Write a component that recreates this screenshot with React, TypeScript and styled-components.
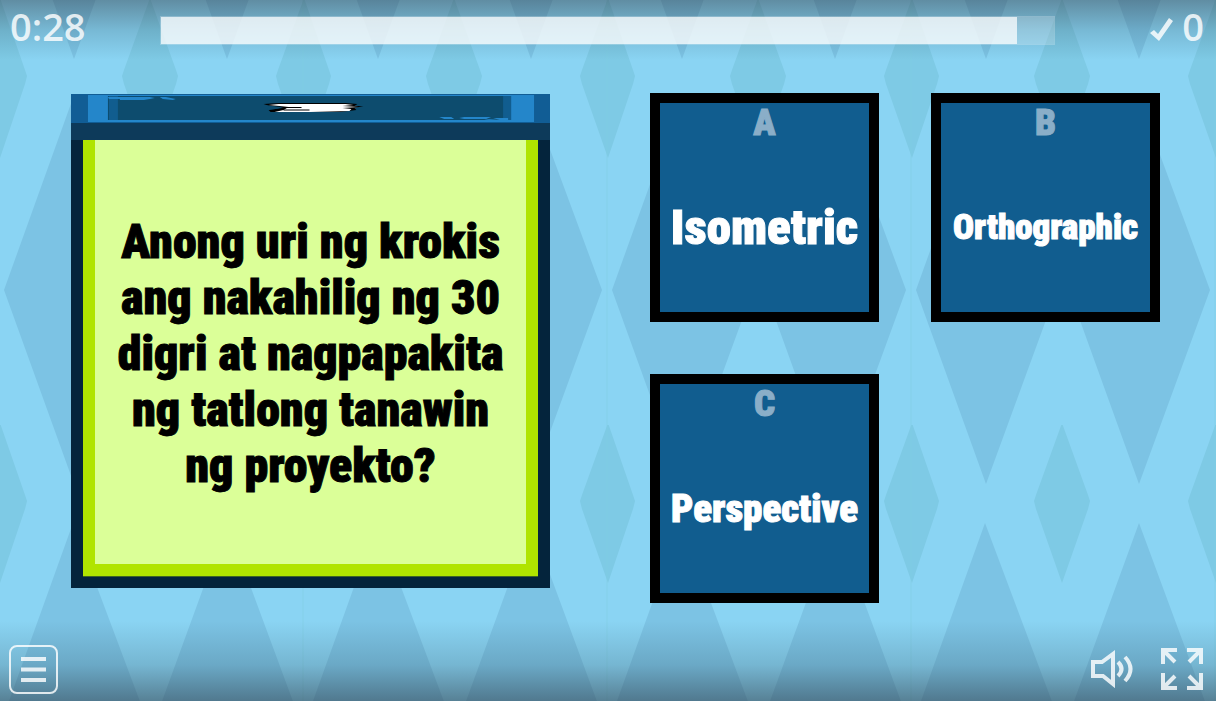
import React from "react";
import styled, { createGlobalStyle } from "styled-components";

const display = `"Roboto Condensed", Roboto, "Open Sans", sans-serif`;

const GlobalStyle = createGlobalStyle`
  *, *::before, *::after { box-sizing: border-box; }
  body { margin: 0; background: #8ad4f3; }
  button { font: inherit; color: inherit; padding: 0; cursor: pointer; }
`;

const Page = styled.div`
  position: relative;
  isolation: isolate;
  display: flex;
  flex-direction: column;
  min-height: 100vh;
  overflow: hidden;
  font-family: "Open Sans", sans-serif;
`;

const Backdrop = styled.svg`
  position: absolute;
  inset: 0;
  z-index: -1;
  width: 100%;
  height: 100%;
`;

const TopBar = styled.header`
  display: grid;
  grid-template-columns: 150px 1fr 149px;
  align-items: start;
  height: 60px;
  padding: 0 12px 0 10px;
  background: linear-gradient(rgba(45, 55, 65, 0.45), rgba(45, 75, 90, 0.2) 50%, rgba(45, 75, 90, 0));
`;

const Figure = styled.div`
  display: flex;
  align-items: center;
  justify-content: ${(p: { $end?: boolean }) => (p.$end ? "flex-end" : "flex-start")};
  gap: 8px;
  height: 52px;
  font-size: 38px;
  font-weight: 600;
  line-height: 52px;
  color: rgba(255, 255, 255, 0.82);
`;

const Tick = styled.svg`
  display: block;
  margin-top: 8px;
`;

const Track = styled.div`
  height: 29px;
  margin-top: 16px;
  border: 1px solid rgba(255, 255, 255, 0.04);
  background: rgba(255, 255, 255, 0.2);
`;

const Fill = styled.div`
  height: 100%;
  background: rgba(255, 255, 255, 0.72);
`;

const Board = styled.main`
  flex: 1;
  display: grid;
  grid-template-columns: 479fr 510fr;
  align-items: start;
  gap: 100px;
  padding: 33px 56px 18px 71px;
`;

const QuestionCard = styled.section`
  display: flex;
  flex-direction: column;
  aspect-ratio: 479 / 494;
  margin-top: 1px;
  background: #04243c;
`;

const Banner = styled.svg`
  display: block;
  flex: none;
  width: 100%;
  height: 29px;
`;

const Band = styled.div`
  flex: none;
  height: 17px;
  background: #0d3a5a;
`;

const QuestionPanel = styled.div`
  flex: 1;
  display: flex;
  align-items: center;
  justify-content: center;
  margin: 0 12px 12px;
  padding-top: 4px;
  border: 12px solid #b0e400;
  border-top: 0;
  box-shadow: 0 1px 0 #3d6424;
  background: #dbff98;
`;

const QuestionText = styled.h1`
  max-width: 404px;
  margin: 0;
  font-family: ${display};
  font-size: 48px;
  font-weight: 900;
  line-height: 56px;
  text-align: center;
  color: #000;
  -webkit-text-stroke: 1px #000;
`;

const Answers = styled.div`
  display: grid;
  grid-template-columns: 1fr 1fr;
  gap: 52px;
`;

const AnswerButton = styled.button`
  display: flex;
  flex-direction: column;
  aspect-ratio: 1;
  min-width: 0;
  border: 10px solid #000;
  background: #115d8f;
  font-family: ${display};
  font-weight: 900;
`;

const Letter = styled.span`
  width: 100%;
  font-size: 37px;
  line-height: 40px;
  color: #8aaec8;
  -webkit-text-stroke: 1px #8aaec8;
`;

const AnswerText = styled.span`
  flex: 1;
  display: flex;
  align-items: center;
  justify-content: center;
  width: 100%;
  font-size: ${(p: { $size: number }) => p.$size}px;
  color: #fff;
  -webkit-text-stroke: 1px #fff;
`;

const BottomBar = styled.footer`
  display: flex;
  align-items: center;
  justify-content: space-between;
  height: 80px;
  padding: 16px 13px 0 9px;
  background: linear-gradient(rgba(45, 75, 90, 0), rgba(45, 75, 90, 0.22) 55%, rgba(45, 60, 72, 0.55));
`;

const Tools = styled.div`
  display: flex;
  align-items: center;
  gap: 27px;
`;

const IconButton = styled.button`
  display: flex;
  border: 0;
  background: none;
  color: rgba(255, 255, 255, 0.82);
`;

const answers = [
  { letter: "A", text: "Isometric", size: 49 },
  { letter: "B", text: "Orthographic", size: 35 },
  { letter: "C", text: "Perspective", size: 39 },
];

function Diamonds() {
  return (
    <Backdrop aria-hidden="true">
      <defs>
        <pattern id="diamonds" width="304" height="425" patternUnits="userSpaceOnUse">
          <rect width="304" height="425" fill="#8ad4f3" />
          <g fill="#7cc3e4">
            <path d="M73 98 L4 290 L74 484 L145 290Z M227 98 L157 290 L227 484 L298 290Z" />
            <path d="M73 -327 L4 -135 L74 59 L145 -135Z M227 -327 L157 -135 L227 59 L298 -135Z" />
          </g>
          <g fill="#7ecae5">
            <path d="M0 -2 L-26 70 L-28 76 L-26 84 L0 158 L25 84 L27 76 L25 70Z M150 -2 L124 70 L122 76 L124 84 L150 158 L176 84 L178 76 L176 70Z M304 -2 L278 70 L276 76 L278 84 L304 158 L329 84 L332 76Z" />
          </g>
          <path d="M303 0V425" stroke="#80c9e2" strokeOpacity=".55" />
        </pattern>
      </defs>
      <rect width="100%" height="100%" fill="url(#diamonds)" />
    </Backdrop>
  );
}

export default function App() {
  return (
    <>
      <GlobalStyle />
      <Page>
        <Diamonds />
        <TopBar>
          <Figure role="timer">0:28</Figure>
          <Track role="progressbar" aria-label="Time left" aria-valuenow={96}>
            <Fill style={{ width: "95.9%" }} />
          </Track>
          <Figure $end>
            <Tick width="24" height="24" viewBox="0 0 24 24" fill="currentColor" aria-hidden="true">
              <path d="M0 15 L4 12 L8 16 L19 0 L23 3 L9 23Z" />
            </Tick>
            0
          </Figure>
        </TopBar>

        <Board>
          <QuestionCard>
            <Banner viewBox="0 0 480 29" preserveAspectRatio="none" aria-hidden="true">
              <rect width="480" height="29" fill="#115d95" />
              <rect x="17" y="1" width="447" height="27" fill="#2486ca" />
              <rect x="37" y="2" width="404" height="24" fill="#0d4c6e" />
              <rect x="38" y="2" width="9" height="24" fill="#115d8f" />
              <rect x="433" y="2" width="8" height="24" fill="#115d8f" />
              <path d="M37 3h18l-4 2h-13z M49 5l6-2h24l5 1-5 1-6 1H49z M89 3h6l10 2-3 1-10-1z" fill="#2486ca" />
              <path d="M369 23h12l3 2h-10z M389 24l5-1h27l-5 2 15 1h-12l-5-1h-20z M423 24h15v2h-8z" fill="#2486ca" />
              <path d="M193 10 L208 9 H275 L287 10 L284 12 L293 12 L284 14 L286 16 L270 18 H200 L198 16 L212 14 L196 11Z" fill="#000" />
              <path d="M199 12 L213 13 L205 15 L196 16Z" fill="#0d4c6e" />
              <path d="M198 11 L208 10 H275 L283 11 L272 12 L288 13 L272 14 L281 15 L279 17 L240 18 H204 L213 16 L218 13 L209 12Z" fill="#fff" />
              <path d="M215 13.500h16 M213 16h26" stroke="#000" fill="none" />
            </Banner>
            <Band />
            <QuestionPanel>
              <QuestionText>Anong uri ng krokis ang nakahilig ng 30 digri at nagpapakita ng tatlong tanawin ng proyekto?</QuestionText>
            </QuestionPanel>
          </QuestionCard>

          <Answers>
            {answers.map((a) => (
              <AnswerButton key={a.letter} type="button">
                <Letter>{a.letter}</Letter>
                <AnswerText $size={a.size}>{a.text}</AnswerText>
              </AnswerButton>
            ))}
          </Answers>
        </Board>

        <BottomBar>
          <IconButton type="button" aria-label="Menu">
            <svg width="49" height="49" viewBox="0 0 49 49" fill="none" stroke="currentColor">
              <rect x="1" y="1" width="47" height="47" rx="7" strokeWidth="2" />
              <path d="M12 14h25M12 24.500h25M12 35h25" strokeWidth="4" />
            </svg>
          </IconButton>
          <Tools>
            <IconButton type="button" aria-label="Sound">
              <svg width="43" height="38" viewBox="0 0 43 38" fill="none" stroke="currentColor" strokeWidth="4">
                <path d="M2 12H11L22 4V34L12 26H2Z" />
                <path d="M27 12Q34 19 27 26" />
                <path d="M34 7Q45 19 34 31" />
              </svg>
            </IconButton>
            <IconButton type="button" aria-label="Full screen">
              <svg width="42" height="42" viewBox="0 0 42 42" fill="none" stroke="currentColor" strokeWidth="4">
                <path d="M16 2H2V16M3 3L14 14" />
                <path d="M26 2H40V16M39 3L28 14" />
                <path d="M2 25V40H16M3 39L14 28" />
                <path d="M40 25V40H26M39 39L28 28" />
              </svg>
            </IconButton>
          </Tools>
        </BottomBar>
      </Page>
    </>
  );
}
